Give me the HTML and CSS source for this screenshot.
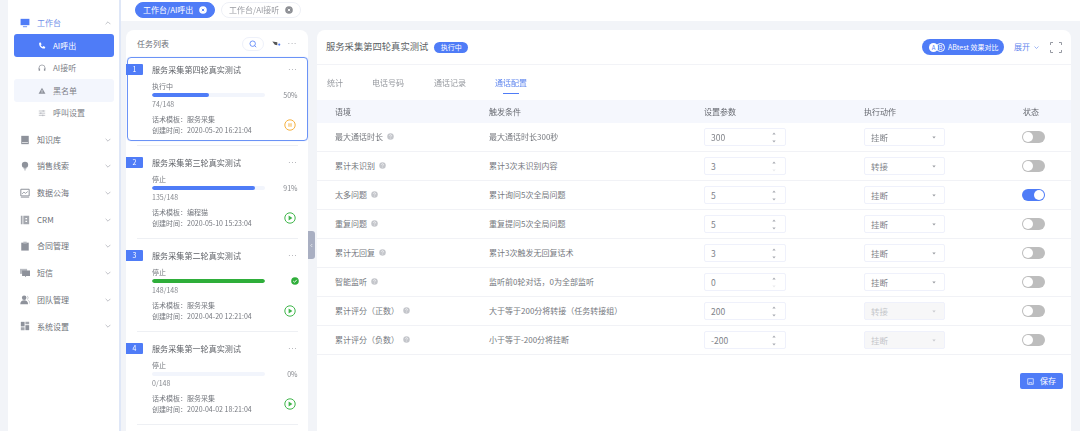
FILE: index.html
```html
<!DOCTYPE html>
<html lang="zh-CN">
<head>
<meta charset="utf-8">
<title>通话配置</title>
<link rel="stylesheet" href="styles.css">
</head>
<body>
<svg class="sprite" aria-hidden="true">
  <symbol id="chev" viewBox="0 0 10 6"><path d="M1 1l4 4 4-4" fill="none" stroke="currentColor" stroke-width="1.2"/></symbol>
  <symbol id="up" viewBox="0 0 6 4"><path d="M3 .5L5.5 3.5H.5z" fill="currentColor"/></symbol>
  <symbol id="down" viewBox="0 0 6 4"><path d="M3 3.5L5.5 .5H.5z" fill="currentColor"/></symbol>
  <symbol id="play" viewBox="0 0 12 12"><circle cx="6" cy="6" r="5.2" fill="none" stroke="#3fb54a" stroke-width="1"/><path d="M4.6 3.6L8.4 6 4.6 8.4z" fill="#3fb54a"/></symbol>
  <symbol id="help" viewBox="0 0 8 8"><circle cx="4" cy="4" r="3.7" fill="#c4c6cb"/><path d="M2.9 3.1a1.1 1.1 0 1 1 1.5 1c-.3.1-.4.3-.4.6M4 5.5v.7" fill="none" stroke="#fff" stroke-width=".7"/></symbol>
  <symbol id="book" viewBox="0 0 12 12"><path d="M1.5 1h9v10h-9z" fill="#8e929b"/><path d="M2.5 8.5h7v1h-7z" fill="#e8e9eb"/></symbol>
  <symbol id="bulb" viewBox="0 0 12 12"><circle cx="6" cy="4.6" r="3.8" fill="#8e929b"/><path d="M4.3 8.6h3.4v1H4.3zM4.8 10.2h2.4v1H4.8z" fill="#a4a7ae"/></symbol>
  <symbol id="chart" viewBox="0 0 12 12"><path d="M1 1.5h10v8H1z" fill="none" stroke="#8e929b" stroke-width="1.2"/><path d="M2.5 7l2.2-2 2 1.4 2.6-2.2" fill="none" stroke="#8e929b"/><path d="M1 10.5h10v1H1z" fill="#8e929b"/></symbol>
  <symbol id="crm" viewBox="0 0 12 12"><path d="M1 1h2v10H1zM4 1h7v10H4z" fill="#a4a7ae"/><path d="M6.5 3.5h2v1.6h-2zM6.5 6.8h2v1.6h-2z" fill="#fff"/></symbol>
  <symbol id="clip" viewBox="0 0 12 12"><path d="M1.5 2h9v9.5h-9z" fill="#8e929b"/><path d="M4 .8h4v2.4H4z" fill="#b8bbc1"/></symbol>
  <symbol id="chat" viewBox="0 0 12 12"><path d="M0 1h8.5v6H0z" fill="#b8bbc1"/><path d="M2.5 3h9.5v6.5H7.5L6 11.2V9.5H2.5z" fill="#8e929b"/></symbol>
  <symbol id="team" viewBox="0 0 12 12"><circle cx="5" cy="3.2" r="2.7" fill="#8e929b"/><path d="M.3 11c0-3 2-4.6 4.7-4.6S9.700 8 9.700 11z" fill="#8e929b"/><path d="M8.500 1.200a2.400 2.400 0 0 1 0 4.200M10 6.500c1.200.6 1.800 2 1.800 3.800" fill="none" stroke="#b8bbc1"/></symbol>
  <symbol id="dash" viewBox="0 0 12 12"><path d="M1 1h4.500v5.500H1z" fill="#8e929b"/><path d="M6.500 1H11v3H6.500zM1 7.500h4.500V11H1z" fill="#a4a7ae"/><path d="M6.500 5H11v6H6.500z" fill="#8e929b"/></symbol>
</svg>

<div class="app">
  <nav class="sidebar">
    <div class="nav-row nav-open">
      <svg class="nav-icon" viewBox="0 0 12 12"><path d="M.7 1h10.600v7.600H.7z" fill="#4f7cf7"/><path d="M3.500 10h5v1h-5z" fill="#4f7cf7"/></svg>
      <span class="nav-label-blue">工作台</span>
      <svg class="nav-chev flip"><use href="#chev"/></svg>
    </div>
    <div class="sub sub-active">
      <svg class="sub-icon" viewBox="0 0 10 10"><path d="M1.500 1l2-.5 1 2.500-1.200.8c.5 1.200 1.300 2 2.500 2.500l.8-1.200 2.500 1-.5 2C4.500 9 .8 5.500 1.500 1z" fill="#fff"/></svg>
      <span>AI呼出</span>
    </div>
    <div class="sub">
      <svg class="sub-icon" viewBox="0 0 10 10"><path d="M1.200 6.500V5a3.800 3.800 0 0 1 7.600 0v1.500" fill="none" stroke="#8e929b" stroke-width=".9"/><path d="M.8 5.500h1.800v3H.8zM7.400 5.500h1.800v3H7.400z" fill="#8e929b"/></svg>
      <span>AI接听</span>
    </div>
    <div class="sub sub-hover">
      <svg class="sub-icon" viewBox="0 0 10 10"><path d="M5 1l4.300 7.500H.7z" fill="#8e929b"/><path d="M4.600 3.800h.8v2.400h-.8zM4.600 6.700h.8v.8h-.8z" fill="#f3f6fd"/></svg>
      <span>黑名单</span>
    </div>
    <div class="sub">
      <svg class="sub-icon" viewBox="0 0 10 10"><path d="M1 2.500h8M1 5.200h8M1 7.900h8M6.500 1.500v2M3.500 4.200v2M6 7v2" fill="none" stroke="#a4a7ae" stroke-width=".8"/></svg>
      <span>呼叫设置</span>
    </div>
    <div class="nav-row nav-first"><svg class="nav-icon"><use href="#book"/></svg><span>知识库</span><svg class="nav-chev"><use href="#chev"/></svg></div>
    <div class="nav-row"><svg class="nav-icon"><use href="#bulb"/></svg><span>销售线索</span><svg class="nav-chev"><use href="#chev"/></svg></div>
    <div class="nav-row"><svg class="nav-icon"><use href="#chart"/></svg><span>数据公海</span><svg class="nav-chev"><use href="#chev"/></svg></div>
    <div class="nav-row"><svg class="nav-icon"><use href="#crm"/></svg><span>CRM</span><svg class="nav-chev"><use href="#chev"/></svg></div>
    <div class="nav-row"><svg class="nav-icon"><use href="#clip"/></svg><span>合同管理</span><svg class="nav-chev"><use href="#chev"/></svg></div>
    <div class="nav-row"><svg class="nav-icon"><use href="#chat"/></svg><span>短信</span><svg class="nav-chev"><use href="#chev"/></svg></div>
    <div class="nav-row"><svg class="nav-icon"><use href="#team"/></svg><span>团队管理</span><svg class="nav-chev"><use href="#chev"/></svg></div>
    <div class="nav-row"><svg class="nav-icon"><use href="#dash"/></svg><span>系统设置</span><svg class="nav-chev"><use href="#chev"/></svg></div>
  </nav>

  <div class="content">
    <header class="topbar">
      <div class="crumb crumb-on"><span>工作台/AI呼出</span><svg class="crumb-x" viewBox="0 0 8 8"><circle cx="4" cy="4" r="3.800" fill="#fff"/><path d="M2.800 2.800l2.400 2.400M5.200 2.800L2.800 5.200" stroke="#4f7cf7" stroke-width=".9"/></svg></div>
      <div class="crumb"><span>工作台/AI接听</span><svg class="crumb-x" viewBox="0 0 8 8"><circle cx="4" cy="4" r="3.800" fill="#8d8f94"/><path d="M2.800 2.800l2.400 2.400M5.200 2.800L2.800 5.200" stroke="#fff" stroke-width=".9"/></svg></div>
    </header>

    <div class="workspace">
      <aside class="list-panel">
        <div class="list-head">
          <span class="list-title">任务列表</span>
          <span class="search-pill"><svg viewBox="0 0 10 10"><circle cx="4.600" cy="4.600" r="3.400" fill="none" stroke="#4f7cf7" stroke-width="1"/><path d="M7 7l2 2" stroke="#4f7cf7" stroke-width="1"/></svg></span>
          <svg class="filter-icon" viewBox="0 0 10 6"><path d="M0 .5l6 1v3.500L3 4.500z" fill="#555"/><circle cx="8.300" cy="4.300" r="1.300" fill="#4f7cf7"/></svg>
          <span class="dots">···</span>
        </div>

        <article class="task task-on">
          <div class="task-title"><span class="num">1</span><span class="name">服务采集第四轮真实测试</span><span class="dots">···</span></div>
          <div class="task-status">执行中</div>
          <div class="progress"><div class="track"><div class="fill fill-50"></div></div><span class="pct">50%</span></div>
          <div class="count">74/148</div>
          <div class="task-foot">
            <div class="meta"><div>话术模板：服务采集</div><div>创建时间：2020-05-20 16:21:04</div></div>
            <svg class="action" viewBox="0 0 12 12"><circle cx="6" cy="6" r="5.200" fill="none" stroke="#f5b140" stroke-width="1"/><path d="M4.500 4.200h1v3.600h-1zM6.500 4.200h1v3.600h-1z" fill="#f5b140"/></svg>
          </div>
        </article>
        <div class="sep"></div>

        <article class="task">
          <div class="task-title"><span class="num">2</span><span class="name">服务采集第三轮真实测试</span><span class="dots">···</span></div>
          <div class="task-status">停止</div>
          <div class="progress"><div class="track"><div class="fill fill-91"></div></div><span class="pct">91%</span></div>
          <div class="count">135/148</div>
          <div class="task-foot">
            <div class="meta"><div>话术模板：编程猫</div><div>创建时间：2020-05-10 15:23:04</div></div>
            <svg class="action"><use href="#play"/></svg>
          </div>
        </article>
        <div class="sep"></div>

        <article class="task">
          <div class="task-title"><span class="num">3</span><span class="name">服务采集第二轮真实测试</span><span class="dots">···</span></div>
          <div class="task-status">停止</div>
          <div class="progress"><div class="track"><div class="fill fill-done"></div></div>
            <svg class="done" viewBox="0 0 8 8"><circle cx="4" cy="4" r="3.800" fill="#2fae3a"/><path d="M2.200 4l1.300 1.300 2.300-2.500" fill="none" stroke="#fff" stroke-width=".9"/></svg></div>
          <div class="count">148/148</div>
          <div class="task-foot">
            <div class="meta"><div>话术模板：服务采集</div><div>创建时间：2020-04-20 12:21:04</div></div>
            <svg class="action"><use href="#play"/></svg>
          </div>
        </article>
        <div class="sep"></div>

        <article class="task">
          <div class="task-title"><span class="num">4</span><span class="name">服务采集第一轮真实测试</span><span class="dots">···</span></div>
          <div class="task-status">停止</div>
          <div class="progress"><div class="track"></div><span class="pct">0%</span></div>
          <div class="count">0/148</div>
          <div class="task-foot">
            <div class="meta"><div>话术模板：服务采集</div><div>创建时间：2020-04-02 18:21:04</div></div>
            <svg class="action"><use href="#play"/></svg>
          </div>
        </article>
        <div class="sep"></div>
      </aside>

      <div class="handle"><svg viewBox="0 0 4 6"><path d="M3 1L1 3l2 2" fill="none" stroke="#fff" stroke-width=".8"/></svg></div>

      <main class="main-panel">
        <div class="main-head">
          <span class="main-title">服务采集第四轮真实测试</span>
          <span class="state-tag">执行中</span>
          <span class="ab-btn">
            <span class="ab-mark"><span class="ab-a">A</span><span class="ab-b">B</span></span>
            <span>ABtest 效果对比</span>
          </span>
          <span class="expand">展开</span>
          <svg class="expand-chev"><use href="#chev"/></svg>
          <svg class="full" viewBox="0 0 12 11"><path d="M.5 3V.5H3M9 .5h2.500V3M.5 8v2.500H3M9 10.500h2.500V8" fill="none" stroke="#8b8f98" stroke-width=".9"/></svg>
        </div>
        <div class="tabs">
          <span class="tab t1">统计</span>
          <span class="tab t2">电话号码</span>
          <span class="tab t3">通话记录</span>
          <span class="tab tab-on">通话配置</span>
        </div>

        <div class="row row-head"><span>语境</span><span>触发条件</span><span>设置参数</span><span>执行动作</span><span>状态</span></div>

        <div class="row">
          <span class="ctx">最大通话时长<svg class="help"><use href="#help"/></svg></span><span>最大通话时长300秒</span>
          <div class="num-input"><span>300</span><span class="step"><svg><use href="#up"/></svg><svg><use href="#down"/></svg></span></div>
          <div class="select"><span>挂断</span><svg><use href="#down"/></svg></div>
          <span class="switch"></span>
        </div>
        <div class="row">
          <span class="ctx">累计未识别<svg class="help"><use href="#help"/></svg></span><span>累计3次未识别内容</span>
          <div class="num-input"><span>3</span><span class="step"><svg><use href="#up"/></svg><svg class="faint"><use href="#down"/></svg></span></div>
          <div class="select"><span>转接</span><svg><use href="#down"/></svg></div>
          <span class="switch"></span>
        </div>
        <div class="row">
          <span class="ctx">太多问题<svg class="help"><use href="#help"/></svg></span><span>累计询问5次全局问题</span>
          <div class="num-input"><span>5</span><span class="step"><svg><use href="#up"/></svg><svg><use href="#down"/></svg></span></div>
          <div class="select"><span>挂断</span><svg><use href="#down"/></svg></div>
          <span class="switch switch-on"></span>
        </div>
        <div class="row">
          <span class="ctx">重复问题<svg class="help"><use href="#help"/></svg></span><span>重复提问5次全局问题</span>
          <div class="num-input"><span>5</span><span class="step"><svg><use href="#up"/></svg><svg><use href="#down"/></svg></span></div>
          <div class="select"><span>挂断</span><svg><use href="#down"/></svg></div>
          <span class="switch"></span>
        </div>
        <div class="row">
          <span class="ctx">累计无回复<svg class="help"><use href="#help"/></svg></span><span>累计3次触发无回复话术</span>
          <div class="num-input"><span>3</span><span class="step"><svg><use href="#up"/></svg><svg><use href="#down"/></svg></span></div>
          <div class="select"><span>挂断</span><svg><use href="#down"/></svg></div>
          <span class="switch"></span>
        </div>
        <div class="row">
          <span class="ctx">智能监听<svg class="help"><use href="#help"/></svg></span><span>监听前0轮对话，0为全部监听</span>
          <div class="num-input"><span>0</span><span class="step"><svg><use href="#up"/></svg><svg class="faint"><use href="#down"/></svg></span></div>
          <div class="select"><span>挂断</span><svg><use href="#down"/></svg></div>
          <span class="switch"></span>
        </div>
        <div class="row">
          <span class="ctx">累计评分（正数）<svg class="help"><use href="#help"/></svg></span><span>大于等于200分将转接（任务转接组）</span>
          <div class="num-input"><span>200</span><span class="step"><svg><use href="#up"/></svg><svg><use href="#down"/></svg></span></div>
          <div class="select select-off"><span>转接</span><svg><use href="#down"/></svg></div>
          <span class="switch"></span>
        </div>
        <div class="row">
          <span class="ctx">累计评分（负数）<svg class="help"><use href="#help"/></svg></span><span>小于等于-200分将挂断</span>
          <div class="num-input"><span>-200</span><span class="step"><svg><use href="#up"/></svg><svg><use href="#down"/></svg></span></div>
          <div class="select select-off"><span>挂断</span><svg><use href="#down"/></svg></div>
          <span class="switch"></span>
        </div>

        <div class="save-bar">
          <button class="save" type="button">
            <svg viewBox="0 0 10 10"><path d="M1 1h8v8H1z" fill="none" stroke="#fff" stroke-width=".9"/><path d="M3 9V6.500h4V9" fill="none" stroke="#fff" stroke-width=".8"/></svg>
            <span>保存</span>
          </button>
        </div>
      </main>
    </div>
  </div>
</div>
</body>
</html>
```
FILE: styles.css
```css
* { box-sizing: border-box; }
html, body { margin: 0; height: 431px; overflow: hidden; }
body {
  background: #f2f4f8;
  color: #6b6e75;
  font: 8px/1.2 "Noto Sans CJK SC", "Noto Sans", sans-serif;
}
.sprite { display: none; }
.app { display: flex; height: 431px; padding-left: 8px; filter: blur(.4px); }

/* sidebar */
.sidebar {
  flex: none;
  width: 113px;
  padding: 12px 5px 0 6px;
  background: #fff;
  border-right: 2px solid #dfe7f7;
}
.nav-row {
  display: flex;
  align-items: center;
  height: 26.7px;
  padding: 0 3px 0 5px;
  color: #6e7178;
}
.nav-open { height: 22px; }
.nav-first { margin-top: 2px; }
.nav-label-blue { color: #6f8fe8; }
.nav-icon { flex: none; width: 10px; height: 10px; margin-right: 7px; margin-left: 1px; }
.nav-chev { flex: none; width: 6px; height: 4px; margin-left: auto; color: #a8abb2; }
.flip { transform: rotate(180deg); }
.sub {
  display: flex;
  align-items: center;
  height: 22.4px;
  padding-left: 24px;
  border-radius: 3px;
  color: #7d8087;
}
.sub-icon { flex: none; width: 8px; height: 8px; margin-right: 7px; }
.sub-active { background: #4f7cf7; color: #fff; height: 23px; }
.sub-hover { background: #f3f6fd; }

/* top bar */
.content { flex: 1; min-width: 0; display: flex; flex-direction: column; }
.topbar {
  flex: none;
  display: flex;
  gap: 6px;
  height: 21px;
  padding: 2px 0 0 14px;
  background: #fff;
}
.crumb {
  display: flex;
  align-items: center;
  justify-content: space-between;
  width: 80px;
  height: 16px;
  padding: 0 7px;
  border: 1px solid #eef0f6;
  border-radius: 8px;
  color: #9a9ca2;
}
.crumb-on { background: #4f7cf7; border-color: #4f7cf7; color: #fff; }
.crumb-x { width: 8px; height: 8px; }

/* layout of panels */
.workspace { flex: 1; min-height: 0; display: flex; padding: 9px 9px 0 5px; }
.list-panel {
  flex: none;
  width: 182px;
  background: #fff;
  border-radius: 8px 8px 0 0;
}
.list-head {
  display: flex;
  align-items: center;
  height: 27px;
  padding: 0 11px;
}
.list-title { font-size: 8px; color: #6b6e75; }
.search-pill {
  display: flex;
  align-items: center;
  justify-content: center;
  width: 22px;
  height: 14px;
  margin-left: auto;
  border: 1px solid #eef1fa;
  border-radius: 7px;
}
.search-pill svg { width: 8px; height: 8px; }
.filter-icon { width: 9px; height: 5px; margin: 0 0 0 8px; }
.list-head .dots { margin-left: 7px; }
.dots { color: #a6a8ae; font: 8px/8px "Liberation Sans", sans-serif; letter-spacing: .5px; }

/* task card */
.task {
  height: 84px;
  margin: 0 .5px 0 1px;
  padding-top: 6px;
  border: 1px solid transparent;
  border-radius: 4px;
}
.task-on { border-color: #6b93f6; box-shadow: 0 0 1px #a9c1fb; }
.task-title { display: flex; align-items: center; height: 11px; padding-right: 9px; }
.num {
  flex: none;
  width: 17px;
  height: 11px;
  margin-left: -2px;
  background: #4f7cf7;
  color: #fff;
  font-size: 7px;
  line-height: 11px;
  text-align: center;
  border-radius: 0 1px 1px 0;
}
.name { margin-left: 9px; color: #5f6268; font-size: 8.100px; }
.task-title .dots { margin-left: auto; }
.task-status { margin: 6px 0 0 24px; height: 11px; line-height: 11px; color: #74777e; font-size: 7px; }
.progress { display: flex; align-items: center; height: 6px; margin: 0 9px 0 24px; }
.track { width: 113px; height: 4.500px; background: #f2f5fc; border-radius: 2px; overflow: hidden; }
.fill { height: 100%; background: #4f7cf7; border-radius: 2px; }
.fill-50 { width: 50%; }
.fill-91 { width: 91%; }
.fill-done { width: 100%; background: #2fae3a; }
.pct { margin-left: auto; color: #85888e; font-size: 7px; }
.done { width: 8px; height: 8px; margin-left: auto; margin-right: -1px; }
.count { margin: 1px 0 0 24px; height: 11px; line-height: 11px; color: #85888e; font-size: 7px; }
.task-foot { display: flex; align-items: center; margin: 4px 11px 0 24px; }
.meta { line-height: 11px; color: #74777e; font-size: 7px; }
.action { flex: none; width: 12px; height: 12px; margin-left: auto; }
.sep { height: 1px; margin: 4px 10px 4px 11px; background: #eef0f4; }

/* collapse handle */
.handle {
  flex: none;
  display: flex;
  align-items: center;
  justify-content: center;
  align-self: flex-start;
  width: 7px;
  height: 28px;
  margin: 201px 2px 0 0;
  background: #a9afc2;
  border-radius: 0 3px 3px 0;
}
.handle svg { width: 3px; height: 5px; }

/* main panel */
.main-panel {
  flex: 1;
  min-width: 0;
  background: #fff;
  border-radius: 8px 8px 0 0;
}
.main-head {
  display: flex;
  align-items: center;
  height: 35px;
  padding: 0 9px 0 9px;
  border-bottom: 1px solid #f2f3f7;
}
.main-title { font-size: 9.300px; color: #5c5f65; }
.state-tag {
  width: 34px;
  height: 11px;
  margin-left: 6px;
  background: #4f7cf7;
  border-radius: 6px;
  color: #fff;
  font-size: 7px;
  line-height: 11px;
  text-align: center;
}
.ab-btn {
  display: flex;
  align-items: center;
  width: 82px;
  height: 16px;
  margin-left: auto;
  padding-left: 7px;
  background: #4f7cf7;
  border-radius: 8px;
  color: #fff;
  font-size: 7px;
}
.ab-mark { display: flex; margin-right: 3px; }
.ab-a, .ab-b {
  width: 9px;
  height: 9px;
  border-radius: 50%;
  font-size: 6px;
  line-height: 9px;
  text-align: center;
}
.ab-a { background: #fff; color: #4f7cf7; }
.ab-b { margin-left: -2px; border: 1px solid #fff; line-height: 7px; }
.expand { margin-left: 10px; color: #5f86ee; }
.expand-chev { width: 5px; height: 3px; margin-left: 4px; color: #5f86ee; }
.full { width: 12px; height: 11px; margin-left: 11px; }

.tabs { display: flex; align-items: center; height: 35px; padding-left: 10px; color: #95989e; }
.tab { flex: none; }
.t2 { margin-left: 29px; }
.t3 { margin-left: 30px; }
.tab-on { position: relative; margin-left: 29px; color: #5f86ee; }
.tab-on::after {
  content: "";
  position: absolute;
  left: 8px;
  right: 8px;
  top: 15px;
  height: 1px;
  background: #4f7cf7;
}

/* config table */
.row {
  display: grid;
  grid-template-columns: 154px 215px 160px 159px 1fr;
  align-items: center;
  height: 29px;
  padding-left: 18px;
  border-bottom: 1px solid #f1f2f6;
  color: #75787e;
}
.row-head { height: 23px; background: #f5f7fd; border-bottom: 0; color: #666970; }
.ctx { display: flex; align-items: center; }
.help { width: 7px; height: 7px; margin: -2px 0 0 4px; }
.num-input, .select {
  display: flex;
  align-items: center;
  justify-content: space-between;
  height: 18px;
  border: 1px solid #eff1fb;
  border-radius: 2px;
  padding: 0 9px 0 6px;
  font-size: 8.500px;
  color: #808389;
}
.num-input { width: 82px; }
.select { width: 81px; padding-right: 8px; }
.select svg { width: 4px; height: 3px; color: #9a9da3; }
.step { display: flex; flex-direction: column; gap: 5px; }
.step svg { display: block; width: 4px; height: 3px; color: #a8abb2; }
.step svg.faint { color: #e9eaed; }
.select-off { background: #f7f7f8; color: #c4c6ca; }
.select-off svg { color: #c9cbcf; }
.switch {
  position: relative;
  width: 23px;
  height: 12px;
  margin-left: -1px;
  background: #bdbdbd;
  border-radius: 6px;
}
.switch::after {
  content: "";
  position: absolute;
  left: 1px;
  top: 1px;
  width: 10px;
  height: 10px;
  background: #fff;
  border-radius: 50%;
}
.switch-on { background: #4f7cf7; }
.switch-on::after { left: 12px; }

.save-bar { display: flex; justify-content: flex-end; padding: 18px 8px 0 0; }
.save {
  display: flex;
  align-items: center;
  justify-content: center;
  gap: 6px;
  width: 43px;
  height: 16px;
  padding: 0;
  border: 0;
  border-radius: 2px;
  background: #4f7cf7;
  color: #fff;
  font: inherit;
}
.save svg { width: 7px; height: 7px; }
```
